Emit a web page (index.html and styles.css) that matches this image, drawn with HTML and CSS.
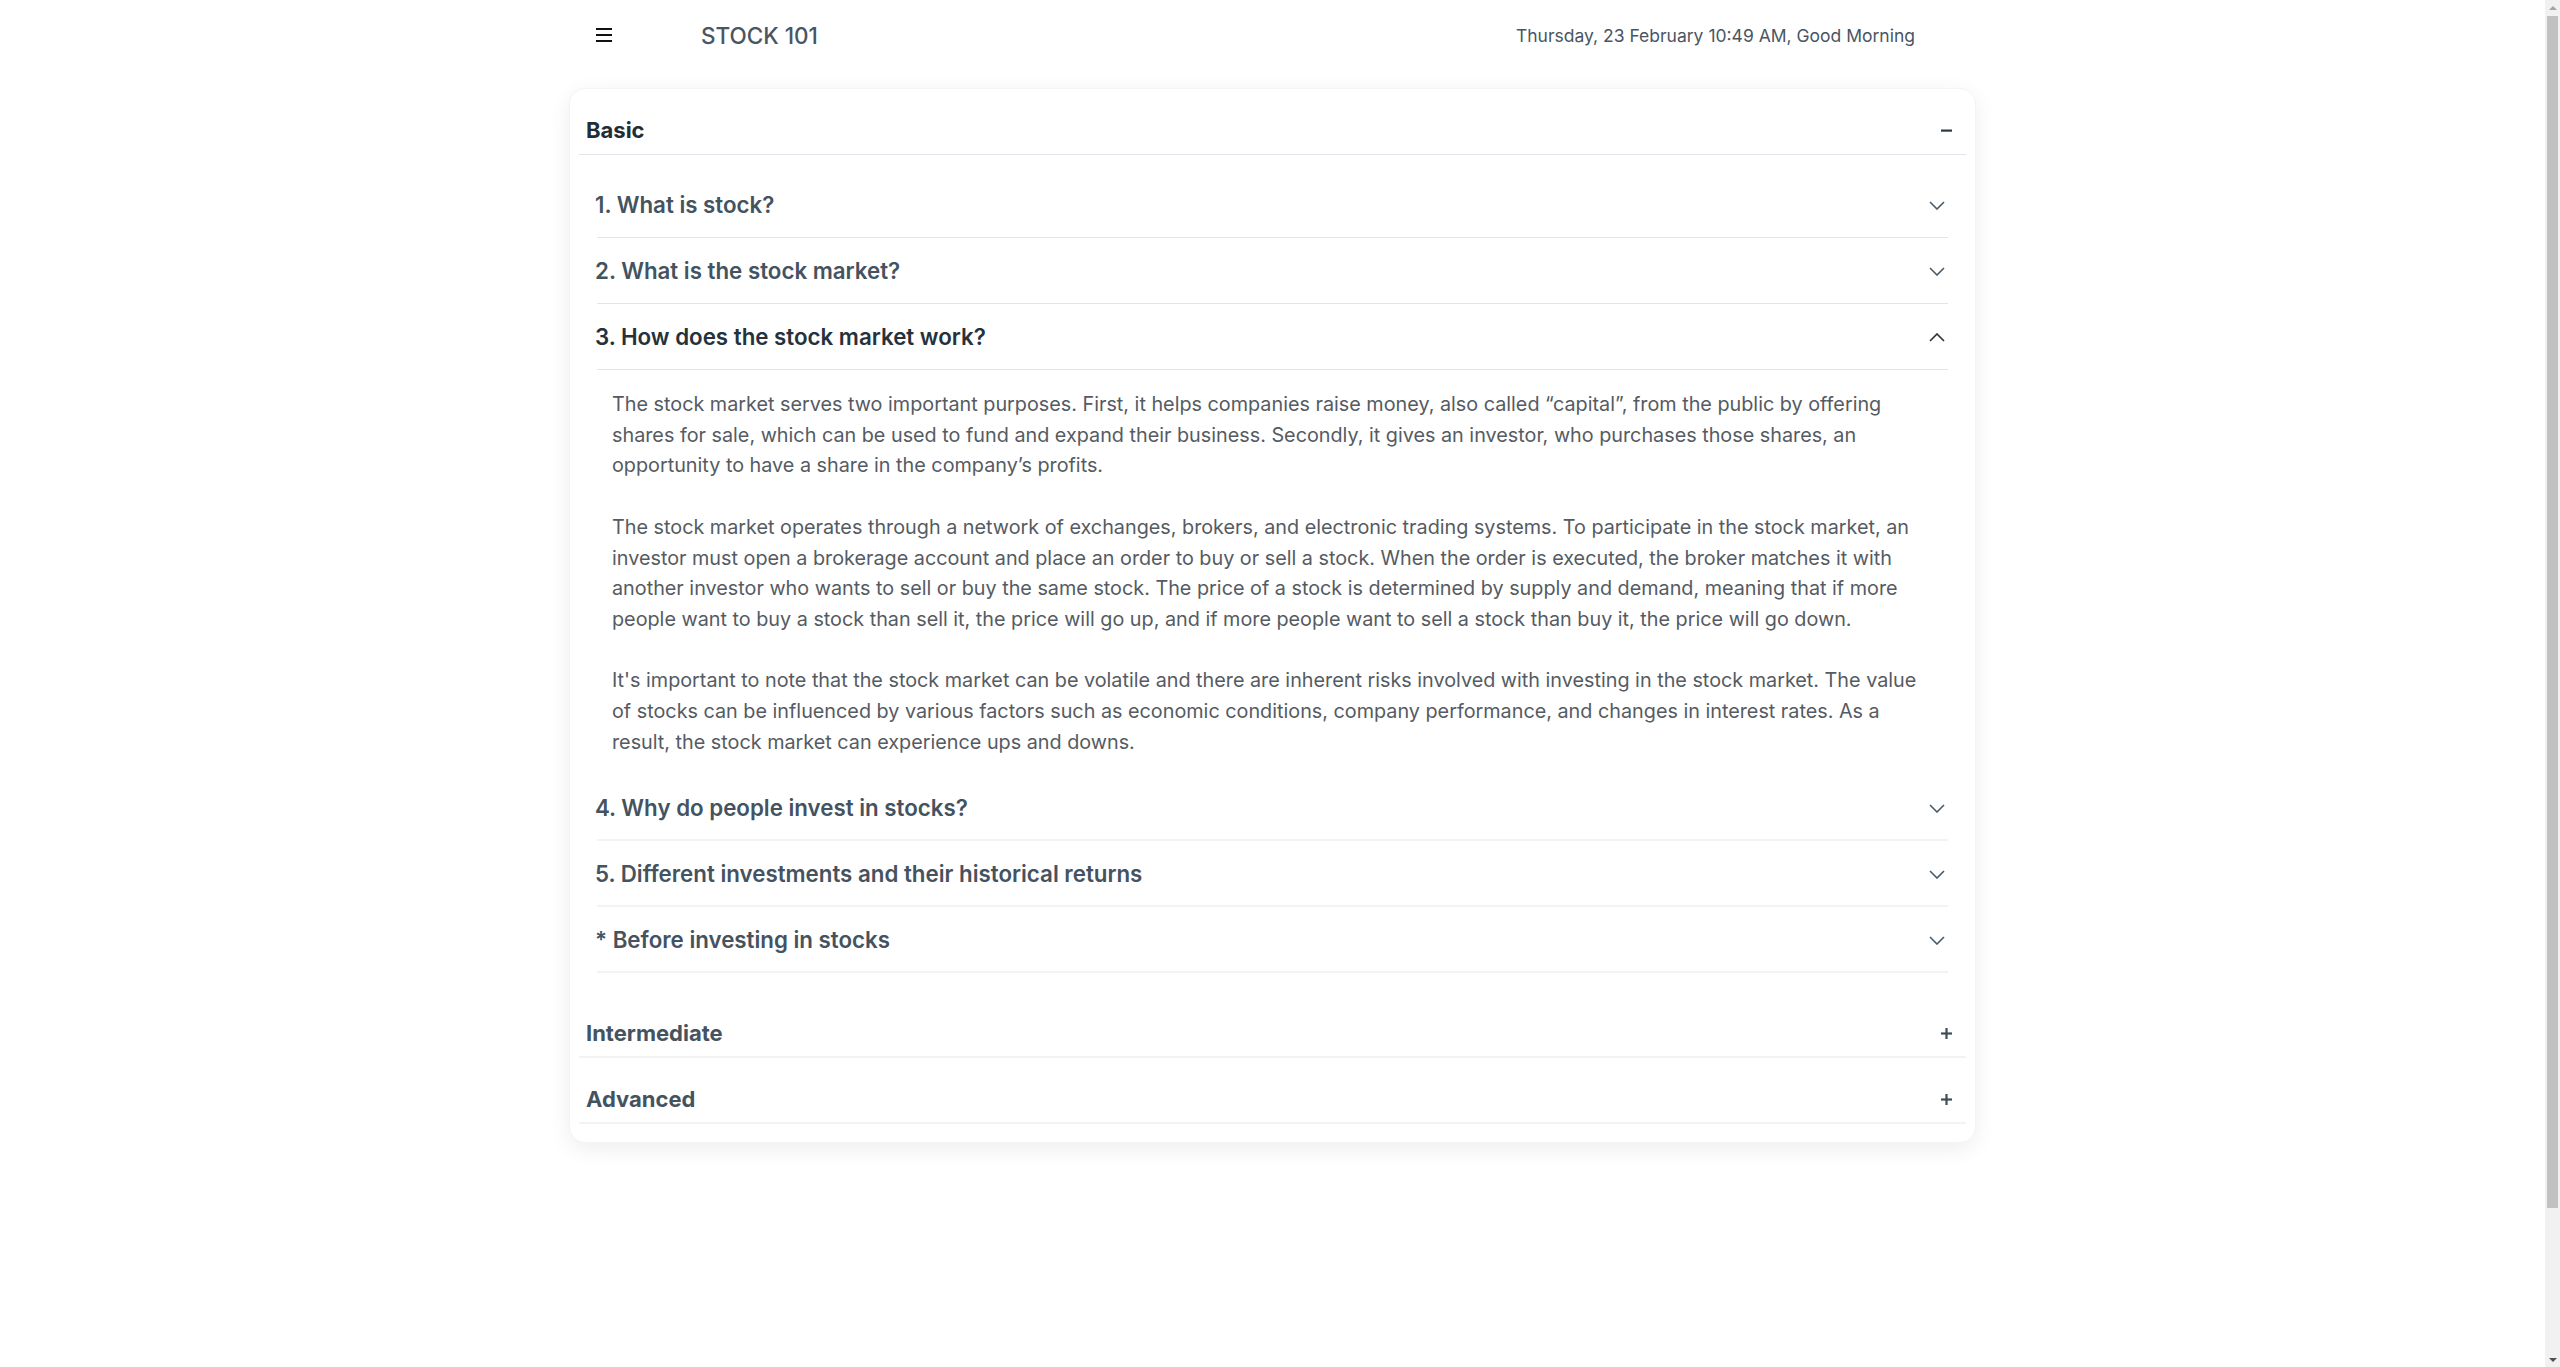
FILE: index.html
```html
<!DOCTYPE html>
<html lang="en">
<head>
<meta charset="utf-8">
<title>STOCK 101</title>
<link rel="stylesheet" href="styles.css">
</head>
<body>
<div class="viewport">
<div class="page">
  <header class="topbar">
    <button class="menu-btn" aria-label="Menu">
      <svg width="16" height="14" viewBox="0 0 16 14"><rect x="0" y="0" width="16" height="2" fill="#111"/><rect x="0" y="6" width="16" height="2" fill="#111"/><rect x="0" y="12" width="16" height="2" fill="#111"/></svg>
    </button>
    <div class="brand">STOCK 101</div>
    <div class="spacer"></div>
    <div class="greeting">Thursday, 23 February 10:49 AM, Good Morning</div>
  </header>

  <main class="card">
    <section class="section open">
      <div class="section-head">
        <span class="section-title">Basic</span>
        <svg class="sign" width="11" height="11" viewBox="0 0 11 11"><rect x="0" y="4.5" width="11" height="2.2" fill="#2d3a44"/></svg>
      </div>
      <div class="section-body">
        <div class="q">
          <div class="q-head"><span class="q-title">1. What is stock?</span>
            <svg class="chev" width="16" height="9" viewBox="0 0 16 9"><path d="M1 1l7 7 7-7" fill="none" stroke="#4a5a66" stroke-width="1.6"/></svg></div>
        </div>
        <div class="q">
          <div class="q-head"><span class="q-title">2. What is the stock market?</span>
            <svg class="chev" width="16" height="9" viewBox="0 0 16 9"><path d="M1 1l7 7 7-7" fill="none" stroke="#4a5a66" stroke-width="1.6"/></svg></div>
        </div>
        <div class="q q-open">
          <div class="q-head"><span class="q-title">3. How does the stock market work?</span>
            <svg class="chev" width="16" height="9" viewBox="0 0 16 9"><path d="M1 8l7-7 7 7" fill="none" stroke="#263238" stroke-width="1.6"/></svg></div>
          <div class="q-body">
            <p>The stock market serves two important purposes. First, it helps companies raise money, also called “capital”, from the public by offering shares for sale, which can be used to fund and expand their business. Secondly, it gives an investor, who purchases those shares, an opportunity to have a share in the company’s profits.</p>
            <p>The stock market operates through a network of exchanges, brokers, and electronic trading systems. To participate in the stock market, an investor must open a brokerage account and place an order to buy or sell a stock. When the order is executed, the broker matches it with another investor who wants to sell or buy the same stock. The price of a stock is determined by supply and demand, meaning that if more people want to buy a stock than sell it, the price will go up, and if more people want to sell a stock than buy it, the price will go down.</p>
            <p>It's important to note that the stock market can be volatile and there are inherent risks involved with investing in the stock market. The value of stocks can be influenced by various factors such as economic conditions, company performance, and changes in interest rates. As a result, the stock market can experience ups and downs.</p>
          </div>
        </div>
        <div class="q q-light">
          <div class="q-head"><span class="q-title">4. Why do people invest in stocks?</span>
            <svg class="chev" width="16" height="9" viewBox="0 0 16 9"><path d="M1 1l7 7 7-7" fill="none" stroke="#4a5a66" stroke-width="1.6"/></svg></div>
        </div>
        <div class="q q-light">
          <div class="q-head"><span class="q-title">5. Different investments and their historical returns</span>
            <svg class="chev" width="16" height="9" viewBox="0 0 16 9"><path d="M1 1l7 7 7-7" fill="none" stroke="#4a5a66" stroke-width="1.6"/></svg></div>
        </div>
        <div class="q q-light">
          <div class="q-head"><span class="q-title">* Before investing in stocks</span>
            <svg class="chev" width="16" height="9" viewBox="0 0 16 9"><path d="M1 1l7 7 7-7" fill="none" stroke="#4a5a66" stroke-width="1.6"/></svg></div>
        </div>
      </div>
    </section>

    <section class="section closed">
      <div class="section-head">
        <span class="section-title">Intermediate</span>
        <svg class="sign" width="11" height="11" viewBox="0 0 11 11"><rect x="0" y="4.4" width="11" height="2.2" fill="#3f4f5a"/><rect x="4.4" y="0" width="2.2" height="11" fill="#3f4f5a"/></svg>
      </div>
    </section>

    <section class="section closed">
      <div class="section-head">
        <span class="section-title">Advanced</span>
        <svg class="sign" width="11" height="11" viewBox="0 0 11 11"><rect x="0" y="4.4" width="11" height="2.2" fill="#3f4f5a"/><rect x="4.4" y="0" width="2.2" height="11" fill="#3f4f5a"/></svg>
      </div>
    </section>
  </main>
</div>
</div>
<div class="scrollbar" aria-hidden="true">
  <div class="sb-arrow sb-up"></div>
  <div class="sb-track"><div class="sb-thumb"></div></div>
  <div class="sb-arrow sb-down"></div>
</div>
</body>
</html>
```

FILE: styles.css
```css
* { box-sizing: border-box; }
html, body { margin: 0; padding: 0; background: #ffffff; }
body {
  font-family: Inter, "Noto Sans", "Liberation Sans", sans-serif;
  color: #4a5568;
  display: flex;
  height: 1367px;
  overflow: hidden;
}
.viewport {
  flex: 1;
  min-width: 0;
  overflow: hidden;
}
.page {
  width: 1407px;
  margin: 0 auto;
}
.topbar {
  height: 70px;
  display: flex;
  align-items: center;
  padding: 0 61px 0 27px;
}
.menu-btn {
  border: 0;
  background: transparent;
  padding: 0;
  width: 16px;
  height: 14px;
  display: flex;
  margin-right: 89px;
}
.brand {
  font-size: 22.5px;
  font-weight: 500;
  color: #4a5563;
}
.spacer { flex: 1; }
.greeting {
  font-size: 17.5px;
  color: #4a5563;
}
.card {
  margin-top: 18px;
  background: #fff;
  border: 1px solid #f3f4f6;
  border-radius: 16px;
  box-shadow: 0 6px 22px rgba(0, 0, 0, 0.07);
  padding: 0 9px 18px;
}
.section-head {
  display: flex;
  align-items: center;
  justify-content: space-between;
  padding: 28px 14px 11px 7px;
  line-height: 26px;
  border-bottom: 1px solid #dfe5ea;
}
.section.closed .section-head { border-bottom: 2px solid #f2f3f4; padding-bottom: 10px; }
.section-title {
  font-size: 22px;
  font-weight: 700;
  color: #44535f;
}
.section.open .section-title { color: #222d36; }
.section-body {
  padding: 17px 18px 19px;
}
.q-head {
  display: flex;
  align-items: center;
  justify-content: space-between;
  padding: 20px 3px 19px 0;
  line-height: 26px;
  border-bottom: 1px solid #dfe5ea;
  font-size: 22.3px;
  font-weight: 600;
  color: #44535f;
}
.q-title { margin-left: -2px; }
.q-light .q-head { border-bottom: 2px solid #f2f3f4; padding-bottom: 18px; }
.q-open .q-head { color: #26323b; }
.q-body {
  padding: 19px 18px 18px 15px;
  font-size: 19.8px;
  line-height: 30.7px;
  color: #555b62;
}
.q-body p { margin: 0 0 30.7px; }
.q-body p:last-child { margin-bottom: 0; }
.sign { display: block; }
.chev { display: block; }

.scrollbar {
  flex: 0 0 15px;
  height: 1367px;
  background: #f1f1f1;
  display: flex;
  flex-direction: column;
}
.sb-arrow {
  height: 15px;
  display: flex;
  align-items: center;
  justify-content: center;
}
.sb-up::before {
  content: "";
  border-left: 4px solid transparent;
  border-right: 4px solid transparent;
  border-bottom: 4px solid #a3a3a3;
}
.sb-down::before {
  content: "";
  border-left: 4px solid transparent;
  border-right: 4px solid transparent;
  border-top: 4px solid #505050;
}
.sb-track {
  flex: 1;
  padding: 1px 2px 0;
}
.sb-thumb {
  height: 1192px;
  background: #c1c1c1;
}
```
